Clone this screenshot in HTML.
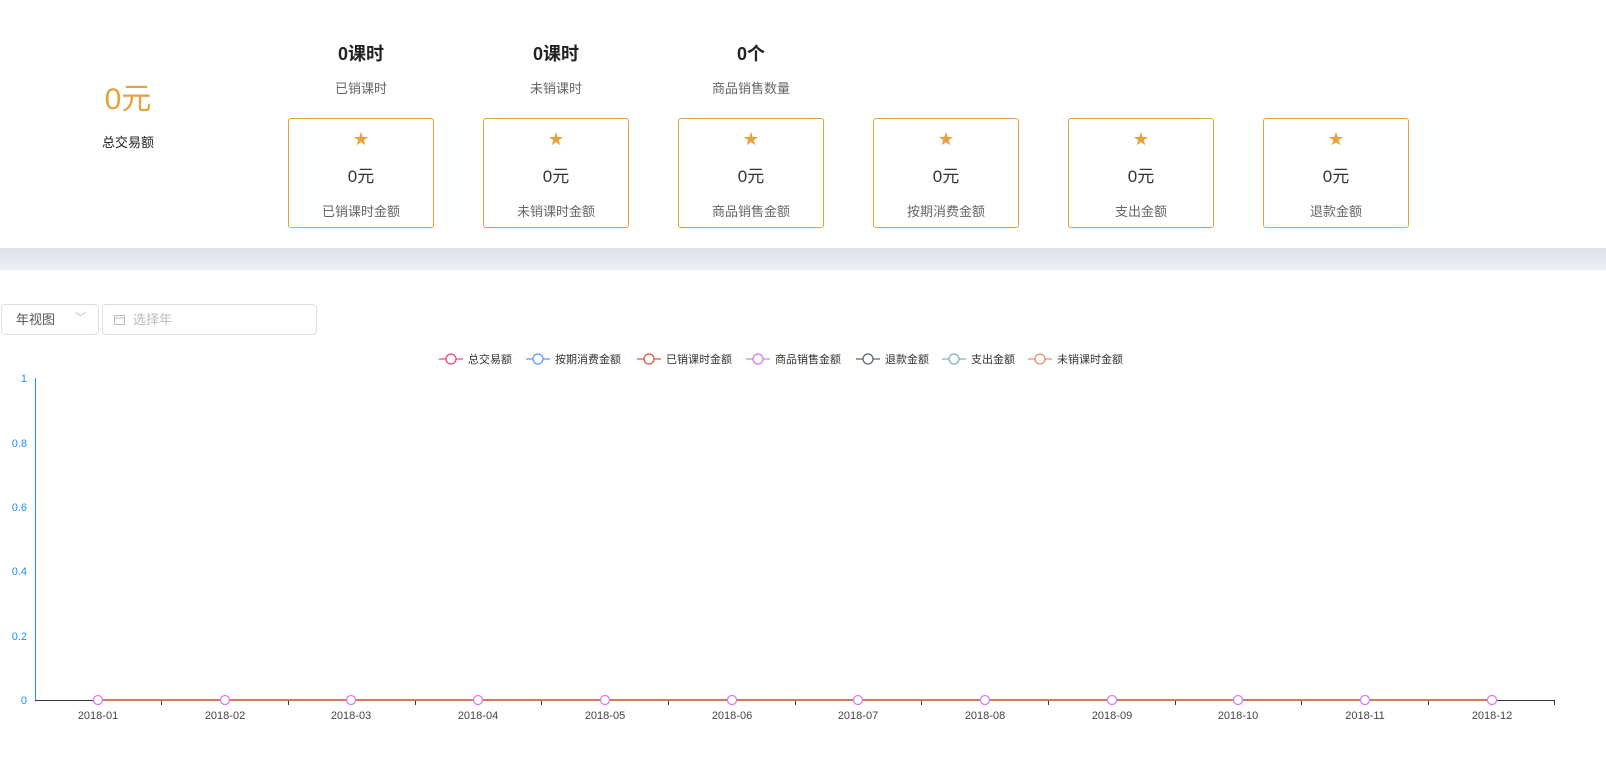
<!DOCTYPE html>
<html><head><meta charset="utf-8"><style>
body{margin:0;width:1606px;height:761px;background:#fff;font-family:"Liberation Sans","Noto Sans CJK SC",sans-serif;position:relative;overflow:hidden}
.a{position:absolute;text-align:center}
.card{position:absolute;top:118px;width:144px;height:108px;border:1px solid #e6a23c;border-radius:3px;text-align:center}
.card .s{color:#e6a23c;font-size:15px;margin-top:9px;height:18px}
.card .v{font-size:17px;color:#333;margin-top:16px}
.card .l{font-size:13px;color:#666;margin-top:14px}
</style></head><body>
<div class="a" style="left:78px;width:100px;top:74px;font-size:30px;color:#e6a23c">0元</div>
<div class="a" style="left:78px;width:100px;top:132px;font-size:13px;color:#222">总交易额</div>
<div class="a" style="left:301px;width:120px;top:40px;font-size:18px;font-weight:bold;color:#222">0课时</div>
<div class="a" style="left:301px;width:120px;top:78px;font-size:13px;color:#666">已销课时</div>
<div class="a" style="left:496px;width:120px;top:40px;font-size:18px;font-weight:bold;color:#222">0课时</div>
<div class="a" style="left:496px;width:120px;top:78px;font-size:13px;color:#666">未销课时</div>
<div class="a" style="left:681px;width:140px;top:40px;font-size:18px;font-weight:bold;color:#222">0个</div>
<div class="a" style="left:681px;width:140px;top:78px;font-size:13px;color:#666">商品销售数量</div>
<div class="card" style="left:288px"><div class="s">★</div><div class="v">0元</div><div class="l">已销课时金额</div></div>
<div class="card" style="left:483px"><div class="s">★</div><div class="v">0元</div><div class="l">未销课时金额</div></div>
<div class="card" style="left:678px"><div class="s">★</div><div class="v">0元</div><div class="l">商品销售金额</div></div>
<div class="card" style="left:873px"><div class="s">★</div><div class="v">0元</div><div class="l">按期消费金额</div></div>
<div class="card" style="left:1068px"><div class="s">★</div><div class="v">0元</div><div class="l">支出金额</div></div>
<div class="card" style="left:1263px"><div class="s">★</div><div class="v">0元</div><div class="l">退款金额</div></div>
<div style="position:absolute;left:0;top:248px;width:1606px;height:22px;background:linear-gradient(#dde1ea,#eceff5)"></div>
<div style="position:absolute;left:1px;top:304px;border:1px solid #dcdfe6;border-radius:4px;font-size:13px;color:#555;line-height:29px;padding-left:14px;box-sizing:border-box;width:98px;height:31px">年视图<span style="position:absolute;right:12px;top:-1px;color:#bbb;font-size:11px">﹀</span></div>
<div style="position:absolute;left:102px;top:304px;width:215px;height:31px;border:1px solid #dcdfe6;border-radius:4px;box-sizing:border-box;font-size:13px;color:#bbb;line-height:29px;padding-left:30px">选择年
<svg style="position:absolute;left:11px;top:9px" width="11" height="11"><rect x="0.5" y="1.5" width="10" height="9" fill="none" stroke="#bbb"/><line x1="0" y1="4" x2="11" y2="4" stroke="#bbb"/></svg></div>
<svg style="position:absolute;left:0;top:0" width="1606" height="761" font-family="Liberation Sans,Noto Sans CJK SC,sans-serif">
<g font-size="11" fill="#333">
<g stroke-width="1.3" fill="#fff">
<line x1="439" y1="359" x2="463" y2="359" stroke="#f0467a"/><circle cx="451" cy="359" r="5" stroke="#f0467a"/>
<line x1="526" y1="359" x2="550" y2="359" stroke="#5a9ef5"/><circle cx="538" cy="359" r="5" stroke="#5a9ef5"/>
<line x1="637" y1="359" x2="661" y2="359" stroke="#d9534f"/><circle cx="649" cy="359" r="5" stroke="#d9534f"/>
<line x1="746" y1="359" x2="770" y2="359" stroke="#d97cf5"/><circle cx="758" cy="359" r="5" stroke="#d97cf5"/>
<line x1="856" y1="359" x2="880" y2="359" stroke="#5a6878"/><circle cx="868" cy="359" r="5" stroke="#5a6878"/>
<line x1="942" y1="359" x2="966" y2="359" stroke="#7bb8b8"/><circle cx="954" cy="359" r="5" stroke="#7bb8b8"/>
<line x1="1028" y1="359" x2="1052" y2="359" stroke="#e09070"/><circle cx="1040" cy="359" r="5" stroke="#e09070"/>
</g>
<text x="468" y="363">总交易额</text><text x="555" y="363">按期消费金额</text><text x="666" y="363">已销课时金额</text><text x="775" y="363">商品销售金额</text><text x="885" y="363">退款金额</text><text x="971" y="363">支出金额</text><text x="1057" y="363">未销课时金额</text>
</g>
<g font-size="11" fill="#1890ff" text-anchor="end">
<text x="27" y="382">1</text><text x="27" y="447">0.8</text><text x="27" y="511">0.6</text><text x="27" y="575">0.4</text><text x="27" y="640">0.2</text><text x="27" y="704">0</text>
</g>
<line x1="35.5" y1="378" x2="35.5" y2="700" stroke="#1890ff"/>
<line x1="35" y1="700.5" x2="1555" y2="700.5" stroke="#333"/>
<g stroke="#333">
<line x1="161.5" y1="700" x2="161.5" y2="705"/><line x1="288.5" y1="700" x2="288.5" y2="705"/><line x1="415.5" y1="700" x2="415.5" y2="705"/><line x1="541.5" y1="700" x2="541.5" y2="705"/><line x1="668.5" y1="700" x2="668.5" y2="705"/><line x1="795.5" y1="700" x2="795.5" y2="705"/><line x1="921.5" y1="700" x2="921.5" y2="705"/><line x1="1048.5" y1="700" x2="1048.5" y2="705"/><line x1="1175.5" y1="700" x2="1175.5" y2="705"/><line x1="1301.5" y1="700" x2="1301.5" y2="705"/><line x1="1428.5" y1="700" x2="1428.5" y2="705"/><line x1="1554.5" y1="700" x2="1554.5" y2="705"/>
</g>
<line x1="98" y1="700" x2="1492" y2="700" stroke="#d07a5c" stroke-width="2"/>
<g fill="#fff" stroke="#d97cf5" stroke-width="1.3">
<circle cx="98" cy="700" r="4.5"/><circle cx="225" cy="700" r="4.5"/><circle cx="351" cy="700" r="4.5"/><circle cx="478" cy="700" r="4.5"/><circle cx="605" cy="700" r="4.5"/><circle cx="732" cy="700" r="4.5"/><circle cx="858" cy="700" r="4.5"/><circle cx="985" cy="700" r="4.5"/><circle cx="1112" cy="700" r="4.5"/><circle cx="1238" cy="700" r="4.5"/><circle cx="1365" cy="700" r="4.5"/><circle cx="1492" cy="700" r="4.5"/>
</g>
<g font-size="11" fill="#444" text-anchor="middle">
<text x="98" y="719">2018-01</text><text x="225" y="719">2018-02</text><text x="351" y="719">2018-03</text><text x="478" y="719">2018-04</text><text x="605" y="719">2018-05</text><text x="732" y="719">2018-06</text><text x="858" y="719">2018-07</text><text x="985" y="719">2018-08</text><text x="1112" y="719">2018-09</text><text x="1238" y="719">2018-10</text><text x="1365" y="719">2018-11</text><text x="1492" y="719">2018-12</text>
</g>
</svg>
</body></html>
